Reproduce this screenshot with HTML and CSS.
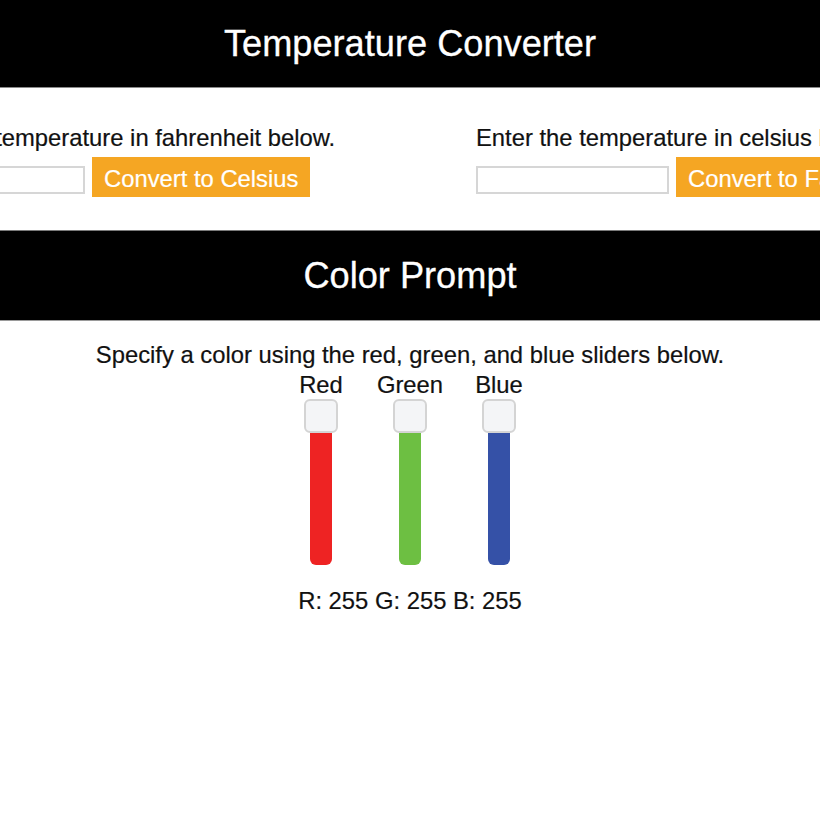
FILE: index.html
```html
<!DOCTYPE html>
<html>
<head>
<meta charset="utf-8">
<link rel="stylesheet" href="styles.css">
</head>
<body>
<header class="bar bar-first"><h1 class="bar-title">Temperature Converter</h1></header>
<section class="temp-row">
  <div class="temp-col">
    <p class="prompt">Enter the temperature in fahrenheit below.</p>
    <div class="form-row">
      <input class="temp-input" type="text">
      <button class="convert-btn">Convert to Celsius</button>
    </div>
  </div>
  <div class="temp-col">
    <p class="prompt">Enter the temperature in celsius below.</p>
    <div class="form-row">
      <input class="temp-input" type="text">
      <button class="convert-btn">Convert to Fahrenheit</button>
    </div>
  </div>
</section>
<header class="bar bar-second"><h1 class="bar-title">Color Prompt</h1></header>
<section class="color-section">
  <p class="color-text">Specify a color using the red, green, and blue sliders below.</p>
  <div class="sliders">
    <div class="slider">
      <span class="slider-label">Red</span>
      <div class="thumb"></div>
      <div class="track track-red"></div>
    </div>
    <div class="slider">
      <span class="slider-label">Green</span>
      <div class="thumb"></div>
      <div class="track track-green"></div>
    </div>
    <div class="slider">
      <span class="slider-label">Blue</span>
      <div class="thumb"></div>
      <div class="track track-blue"></div>
    </div>
  </div>
  <p class="rgb-values">R: 255 G: 255 B: 255</p>
</section>
</body>
</html>
```
FILE: styles.css
```css
html, body {
  margin: 0;
  padding: 0;
  background: #ffffff;
  overflow: hidden;
}
body {
  font-family: "Liberation Sans", Arial, sans-serif;
  color: #111;
  font-size: 23.8px;
  width: 820px;
  height: 820px;
}
.bar {
  background: #000;
  display: flex;
  align-items: center;
  justify-content: center;
}
.bar-first {
  height: 87px;
  border-bottom: 1px solid #8a8a8a;
}
.bar-second {
  height: 89px;
  border-top: 1px solid #7a7a7a;
  border-bottom: 1px solid #9a9a9a;
  margin-top: 33px;
}
.bar-title {
  margin: 0;
  color: #fff;
  font-weight: normal;
  font-size: 36.2px;
  line-height: 40px;
  -webkit-text-stroke: 0.3px #fff;
}
.temp-row {
  display: flex;
  margin-left: -108px;
  margin-top: 36px;
  width: 1300px;
}
.temp-col {
  width: 584px;
  flex: none;
}
.prompt {
  margin: 0;
  line-height: 28px;
  white-space: nowrap;
  -webkit-text-stroke: 0.2px #111;
}
.form-row {
  display: flex;
  align-items: flex-end;
  gap: 7px;
  margin-top: 5px;
}
.temp-input {
  width: 193px;
  height: 28px;
  box-sizing: border-box;
  border: 2px solid #d6d6d6;
  background: #fff;
  margin: 0 0 3px 0;
  padding: 0;
}
.convert-btn {
  height: 40px;
  background: #f5a623;
  color: #fff;
  border: none;
  padding: 3px 12px 0 12px;
  font-family: "Liberation Sans", Arial, sans-serif;
  font-size: 23.8px;
  white-space: nowrap;
  margin: 0;
  -webkit-text-stroke: 0.2px #fff;
}
.color-section {
  display: flex;
  flex-direction: column;
  align-items: center;
  padding-top: 20px;
  -webkit-text-stroke: 0.2px #111;
}
.color-text {
  margin: 0;
  line-height: 28px;
}
.sliders {
  display: flex;
  justify-content: center;
  margin-top: 2px;
}
.slider {
  width: 89px;
  display: flex;
  flex-direction: column;
  align-items: center;
}
.slider-label {
  line-height: 28px;
}
.thumb {
  width: 34px;
  height: 34px;
  box-sizing: border-box;
  border: 2px solid #d4d4d4;
  border-radius: 6px;
  background: #f4f5f7;
}
.track {
  width: 22px;
  height: 132px;
  border-radius: 0 0 6px 6px;
}
.track-red { background: #ee2323; }
.track-green { background: #6dbf42; }
.track-blue { background: #3551a7; }
.rgb-values {
  margin: 22px 0 0 0;
  line-height: 28px;
}
```
